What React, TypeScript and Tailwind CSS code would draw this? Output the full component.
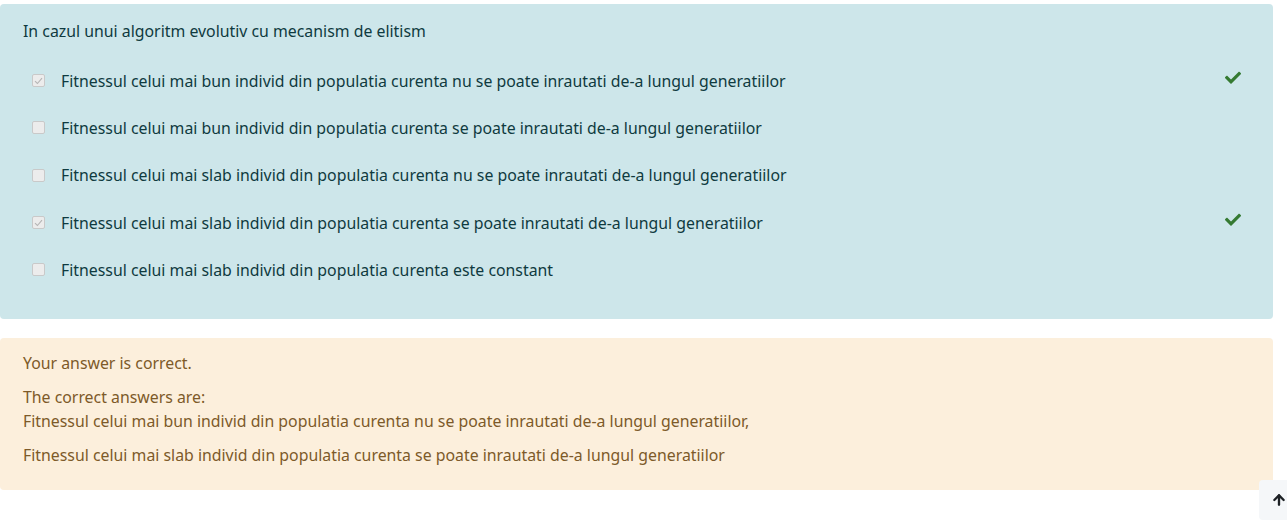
import { ArrowUp } from 'lucide-react';

const options = [
    { text: 'Fitnessul celui mai bun individ din populatia curenta nu se poate inrautati de-a lungul generatiilor', checked: true },
    { text: 'Fitnessul celui mai bun individ din populatia curenta se poate inrautati de-a lungul generatiilor', checked: false },
    { text: 'Fitnessul celui mai slab individ din populatia curenta nu se poate inrautati de-a lungul generatiilor', checked: false },
    { text: 'Fitnessul celui mai slab individ din populatia curenta se poate inrautati de-a lungul generatiilor', checked: true },
    { text: 'Fitnessul celui mai slab individ din populatia curenta este constant', checked: false },
];

function Box({ checked }: { checked: boolean }) {
    return (
        <span className="w-[13px] h-[13px] border border-[#c9c9c9] bg-[#ececec] rounded-[2px] flex items-center justify-center shrink-0">
            {checked && (
                <svg width="9" height="8" viewBox="0 0 9 8" fill="none">
                    <path d="M1 4.2 L3.4 6.5 L8 1.2" stroke="#b5b5b5" strokeWidth="1.1" />
                </svg>
            )}
        </span>
    );
}

function Tick() {
    return (
        <svg width="16" height="13" viewBox="0 0 512 400" className="block">
            <path fill="#357a32" d="M173.9 390.3 7.5 223.9c-10-10-10-26.2 0-36.2l36.2-36.2c10-10 26.2-10 36.2 0L192 263.6 432.1 23.5c10-10 26.2-10 36.2 0l36.2 36.2c10 10 10 26.2 0 36.2L210.1 390.3c-10 10-26.2 10-36.2 0z" />
        </svg>
    );
}

export default function App() {
    return (
        <div className="w-[1287px] h-[527px] bg-white relative overflow-hidden font-['Noto_Sans',sans-serif] text-[15.85px]">
            <div className="w-[1273px] pt-[4px]">
                <div className="bg-[#cde6ea] text-[#0f3a40] rounded-[4px] pl-[23px] pr-[32px] pt-[15px] pb-[26px]">
                    <p className="leading-[24px] mb-[14px]">In cazul unui algoritm evolutiv cu mecanism de elitism</p>
                    <div className="flex flex-col">
                        {options.map((o, i) => (
                            <div key={i} className="flex items-center h-[47.3px] pl-[9px]">
                                <Box checked={o.checked} />
                                <span className="ml-[16px] flex-1 leading-[24px]">{o.text}</span>
                                {o.checked && <span className="-mt-[6px] shrink-0"><Tick /></span>}
                            </div>
                        ))}
                    </div>
                </div>

                <div className="mt-[19px] bg-[#fcefdc] text-[#7d5a29] rounded-[4px] px-[23px] pt-[13px] pb-[23px]">
                    <p className="leading-[24px] mb-[10px]">Your answer is correct.</p>
                    <p className="leading-[24px]">The correct answers are:</p>
                    <p className="leading-[24px] mb-[10px]">Fitnessul celui mai bun individ din populatia curenta nu se poate inrautati de-a lungul generatiilor,</p>
                    <p className="leading-[24px]">Fitnessul celui mai slab individ din populatia curenta se poate inrautati de-a lungul generatiilor</p>
                </div>
            </div>

            <button className="absolute left-[1259px] top-[480px] w-[40px] h-[40px] bg-[#f5f7f9] rounded-[4px] flex items-center pl-[12px]">
                <ArrowUp size={16} strokeWidth={3.5} color="#1d2125" />
            </button>
        </div>
    );
}
